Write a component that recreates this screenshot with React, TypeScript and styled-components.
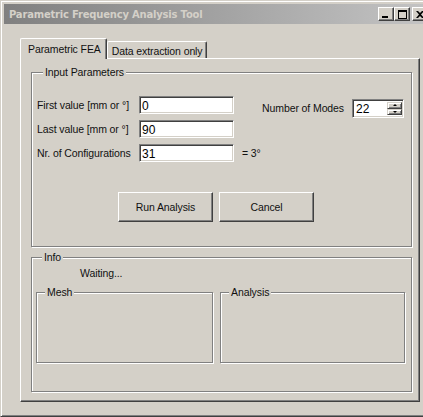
import styled, { createGlobalStyle } from "styled-components";

const face = "#d4d0c8";
const shadow = "#808080";
const darkShadow = "#404040";

const GlobalStyle = createGlobalStyle`
  html, body {
    margin: 0;
    padding: 0;
    overflow: hidden;
    background: #ffffff;
  }
`;

export default function App() {
  return (
    <>
      <GlobalStyle />
      <Window>
        <TitleBar>
          <TitleText>Parametric Frequency Analysis Tool</TitleText>
          <TitleButtons>
            <TitleButton aria-label="Minimize">
              <svg width="8" height="8" viewBox="0 0 8 8">
                <rect x="0" y="6" width="6" height="2" fill="#000" />
              </svg>
            </TitleButton>
            <TitleButton aria-label="Maximize">
              <svg width="9" height="9" viewBox="0 0 9 9">
                <path d="M0 0h9v9H0z M1 2v6h7V2z" fill="#000" fillRule="evenodd" />
              </svg>
            </TitleButton>
            <CloseButton aria-label="Close">
              <svg width="8" height="7" viewBox="0 0 8 7">
                <path
                  d="M0 0h2l2 2 2-2h2L5 3.5 8 7H6L4 5 2 7H0l3-3.5z"
                  fill="#000"
                />
              </svg>
            </CloseButton>
          </TitleButtons>
        </TitleBar>

        <Client>
          <TabStrip>
            <Tab $active>Parametric FEA</Tab>
            <Tab>Data extraction only</Tab>
          </TabStrip>

          <TabPanel>
            <InputGroup>
              <Legend>Input Parameters</Legend>
              <FieldsRow>
                <FieldGrid>
                  <Label>First value [mm or °]</Label>
                  <TextInput defaultValue="0" />
                  <span />
                  <Label>Last value [mm or °]</Label>
                  <TextInput defaultValue="90" />
                  <span />
                  <Label>Nr. of Configurations</Label>
                  <TextInput defaultValue="31" />
                  <Step>= 3°</Step>
                </FieldGrid>

                <ModesField>
                  <Label>Number of Modes</Label>
                  <Spinner>
                    <SpinInput defaultValue="22" />
                    <SpinButtons>
                      <SpinButton aria-label="Up">
                        <Arrow $up />
                      </SpinButton>
                      <SpinButton aria-label="Down">
                        <Arrow />
                      </SpinButton>
                    </SpinButtons>
                  </Spinner>
                </ModesField>
              </FieldsRow>

              <ButtonRow>
                <PushButton>Run Analysis</PushButton>
                <PushButton>Cancel</PushButton>
              </ButtonRow>
            </InputGroup>

            <InfoGroup>
              <Legend>Info</Legend>
              <Status>Waiting...</Status>
              <StatusBoxes>
                <StatusBox>
                  <Legend $tight>Mesh</Legend>
                </StatusBox>
                <StatusBox>
                  <Legend $tight>Analysis</Legend>
                </StatusBox>
              </StatusBoxes>
            </InfoGroup>
          </TabPanel>
        </Client>
      </Window>
    </>
  );
}

const Window = styled.div`
  box-sizing: border-box;
  width: 434px;
  height: 417px;
  padding: 3px;
  display: flex;
  flex-direction: column;
  background: ${face};
  border: 1px solid;
  border-color: ${face} ${darkShadow} ${darkShadow} ${face};
  box-shadow: inset 1px 1px #ffffff, inset -1px -1px ${shadow};
  font-family: "Liberation Sans", Arial, sans-serif;
  font-size: 10.5px;
  letter-spacing: -0.1px;
  color: #111;
`;

const TitleBar = styled.div`
  height: 20px;
  display: flex;
  align-items: center;
  justify-content: space-between;
  padding: 0 2px 0 5px;
  background: linear-gradient(to right, #808080, #c4c4c4);
`;

const TitleText = styled.span`
  font-family: "DejaVu Sans", Tahoma, sans-serif;
  font-weight: bold;
  font-size: 10px;
  letter-spacing: -0.2px;
  color: #d4d0c8;
  white-space: nowrap;
`;

const TitleButtons = styled.div`
  display: flex;
  align-items: center;
`;

const TitleButton = styled.div`
  box-sizing: border-box;
  width: 16px;
  height: 14px;
  display: flex;
  align-items: center;
  justify-content: center;
  background: ${face};
  border: 1px solid;
  border-color: #ffffff ${darkShadow} ${darkShadow} #ffffff;
  box-shadow: inset -1px -1px ${shadow};
`;

const CloseButton = styled(TitleButton)`
  margin-left: 2px;
`;

const Client = styled.div`
  flex: 1;
  display: flex;
  flex-direction: column;
  padding: 14px 10px 11px 16px;
`;

const TabStrip = styled.div`
  display: flex;
  align-items: flex-end;
  height: 20px;
`;

const Tab = styled.div<{ $active?: boolean }>`
  position: relative;
  z-index: 1;
  box-sizing: border-box;
  height: ${({ $active }) => ($active ? "21px" : "17px")};
  margin-bottom: ${({ $active }) => ($active ? "-1px" : "0")};
  padding: ${({ $active }) => ($active ? "4px 5px 0 7px" : "3px 3px 0 4px")};
  background: ${face};
  border-top: 1px solid #ffffff;
  border-left: 1px solid #ffffff;
  border-right: 1px solid ${darkShadow};
  box-shadow: inset -1px 0 ${shadow};
  border-radius: 2px 2px 0 0;
  line-height: 13px;
  white-space: nowrap;
`;

const TabPanel = styled.div`
  flex: 1;
  display: flex;
  flex-direction: column;
  gap: 4px;
  padding: 7px 7px 9px 10px;
  border: 1px solid;
  border-color: #ffffff ${darkShadow} ${darkShadow} #ffffff;
  box-shadow: inset -1px -1px ${shadow};
`;

const Group = styled.fieldset`
  margin: 0;
  min-width: 0;
  border: 1px solid ${shadow};
  box-shadow: inset 1px 1px #ffffff, 1px 1px #ffffff;
`;

const Legend = styled.legend<{ $tight?: boolean }>`
  margin-left: ${({ $tight }) => ($tight ? "8px" : "6px")};
  padding: 0 2px;
  background: ${face};
  line-height: 13px;
`;

const InputGroup = styled(Group)`
  padding: 17px 7px 24px 5px;
`;

const FieldsRow = styled.div`
  display: flex;
  justify-content: space-between;
  align-items: flex-start;
`;

const FieldGrid = styled.div`
  display: grid;
  grid-template-columns: 102px 95px auto;
  grid-auto-rows: 18px;
  row-gap: 6px;
  align-items: center;
`;

const Label = styled.span`
  line-height: 13px;
  white-space: nowrap;
`;

const Step = styled.span`
  margin-left: 8px;
  white-space: nowrap;
`;

const sunken = `
  box-sizing: border-box;
  border: 1px solid;
  border-color: ${shadow} #ffffff #ffffff ${shadow};
  box-shadow: inset 1px 1px ${darkShadow}, inset -1px -1px ${face};
  background: #ffffff;
`;

const TextInput = styled.input`
  ${sunken}
  width: 95px;
  height: 18px;
  padding: 1px 2px 0;
  font-family: "Liberation Sans", Arial, sans-serif;
  font-size: 12px;
  color: #000;
  outline: none;
`;

const ModesField = styled.div`
  display: flex;
  align-items: center;
  gap: 8px;
  margin-top: 3px;
`;

const Spinner = styled.div`
  ${sunken}
  width: 52px;
  height: 19px;
  display: flex;
  padding: 2px 1px 2px 2px;
`;

const SpinInput = styled.input`
  flex: 1;
  min-width: 0;
  border: none;
  padding: 0 1px;
  font-family: "Liberation Sans", Arial, sans-serif;
  font-size: 12px;
  background: transparent;
  outline: none;
`;

const SpinButtons = styled.div`
  width: 15px;
  display: flex;
  flex-direction: column;
`;

const SpinButton = styled.div`
  flex: 1;
  display: flex;
  align-items: center;
  justify-content: center;
  box-sizing: border-box;
  background: ${face};
  border: 1px solid;
  border-color: ${face} ${darkShadow} ${darkShadow} ${face};
  box-shadow: inset 1px 1px #ffffff, inset -1px -1px ${shadow};
`;

const Arrow = styled.span<{ $up?: boolean }>`
  width: 0;
  height: 0;
  border-left: 2px solid transparent;
  border-right: 2px solid transparent;
  ${({ $up }) =>
    $up ? "border-bottom: 2px solid #000;" : "border-top: 2px solid #000;"}
`;

const ButtonRow = styled.div`
  display: flex;
  gap: 6px;
  margin: 30px 0 0 81px;
`;

const PushButton = styled.div`
  box-sizing: border-box;
  width: 95px;
  height: 30px;
  display: flex;
  align-items: center;
  justify-content: center;
  background: ${face};
  border: 1px solid;
  border-color: #ffffff ${darkShadow} ${darkShadow} #ffffff;
  box-shadow: inset -1px -1px ${shadow};
`;

const InfoGroup = styled(Group)`
  flex: 1;
  display: flex;
  flex-direction: column;
  padding: 3px 6px 28px 4px;
`;

const Status = styled.div`
  margin-left: 44px;
  line-height: 13px;
`;

const StatusBoxes = styled.div`
  display: grid;
  grid-template-columns: 177px 1fr;
  gap: 7px;
  margin-top: 6px;
`;

const StatusBox = styled(Group)`
  box-sizing: border-box;
  height: 77px;
  padding: 0;
`;
